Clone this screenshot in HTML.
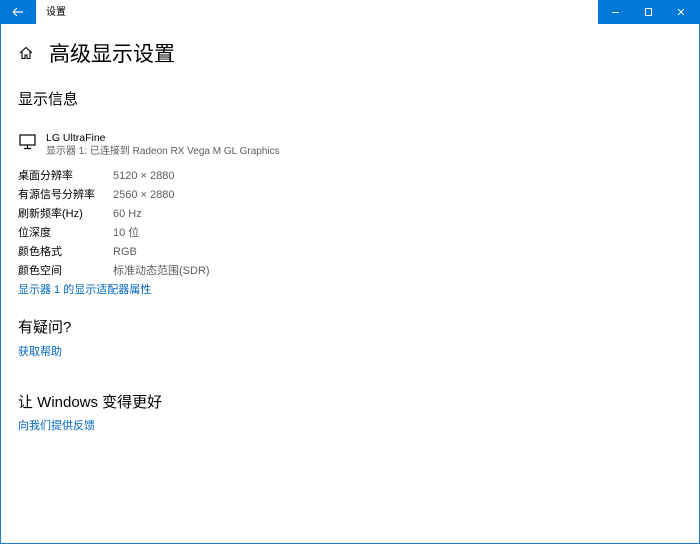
<!DOCTYPE html>
<html><head><meta charset="utf-8"><style>
*{margin:0;padding:0;box-sizing:border-box}
body{width:700px;height:544px;background:#fff;font-family:"Liberation Sans","Noto Sans CJK SC",sans-serif;color:#000;position:relative;overflow:hidden}
.frame{position:absolute;inset:0;border:1px solid #1a7ad4;border-top:none}
.t{position:absolute;white-space:nowrap;line-height:16px}
.back{position:absolute;left:0;top:0;width:36px;height:24px;background:#0078d7}
.ctl{position:absolute;right:0;top:0;width:102px;height:24px;background:#0078d7}
.g{color:#5d5d5d}
.l{color:#0067c0}
.s{font-size:11px}
</style></head><body>
<div class="frame"></div>
<div class="back"><svg width="36" height="24"><path d="M13 12H23M13 12L17 8M13 12L17 16" stroke="#fff" stroke-width="1.2" fill="none"/></svg></div>
<div class="t" style="left:46px;top:5px;font-size:10px">设置</div>
<div class="ctl"><svg width="102" height="24"><path d="M14 12.5H21" stroke="#fff"/><rect x="47.5" y="8.5" width="6" height="7" stroke="#fff" fill="none"/><path d="M80 9L86 15M86 9L80 15" stroke="#fff"/></svg></div>
<svg class="t" style="left:19px;top:46px" width="14" height="14"><path d="M1 7L7 1.5L13 7M3 5.5V12.5H6V9H8V12.5H11V5.5" stroke="#000" stroke-width="1.1" fill="none"/></svg>
<div class="t" style="left:49px;top:41px;font-size:21px;line-height:28px">高级显示设置</div>
<div class="t" style="left:18px;top:90px;font-size:15px;line-height:20px">显示信息</div>
<svg class="t" style="left:19px;top:134px" width="18" height="16"><rect x="1" y="1" width="15" height="10" stroke="#000" stroke-width="1.2" fill="none"/><path d="M8.5 11V14M5 14.5H12" stroke="#000" stroke-width="1.2"/></svg>
<div class="t" style="left:46px;top:130px;font-size:10.5px">LG UltraFine</div>
<div class="t g" style="left:46px;top:144px;font-size:10px">显示器 1: 已连接到 Radeon RX Vega M GL Graphics</div>
<div class="t s" style="left:18px;top:168px">桌面分辨率</div><div class="t g s" style="left:113px;top:168px">5120 × 2880</div>
<div class="t s" style="left:18px;top:187px">有源信号分辨率</div><div class="t g s" style="left:113px;top:187px">2560 × 2880</div>
<div class="t s" style="left:18px;top:206px">刷新频率(Hz)</div><div class="t g s" style="left:113px;top:206px">60 Hz</div>
<div class="t s" style="left:18px;top:225px">位深度</div><div class="t g s" style="left:113px;top:225px">10 位</div>
<div class="t s" style="left:18px;top:244px">颜色格式</div><div class="t g s" style="left:113px;top:244px">RGB</div>
<div class="t s" style="left:18px;top:263px">颜色空间</div><div class="t g s" style="left:113px;top:263px">标准动态范围(SDR)</div>
<div class="t l s" style="left:18px;top:282px">显示器 1 的显示适配器属性</div>
<div class="t" style="left:18px;top:318px;font-size:15px;line-height:20px">有疑问?</div>
<div class="t l s" style="left:18px;top:344px">获取帮助</div>
<div class="t" style="left:18px;top:393px;font-size:15px;line-height:20px">让 Windows 变得更好</div>
<div class="t l s" style="left:18px;top:418px">向我们提供反馈</div>
</body></html>
